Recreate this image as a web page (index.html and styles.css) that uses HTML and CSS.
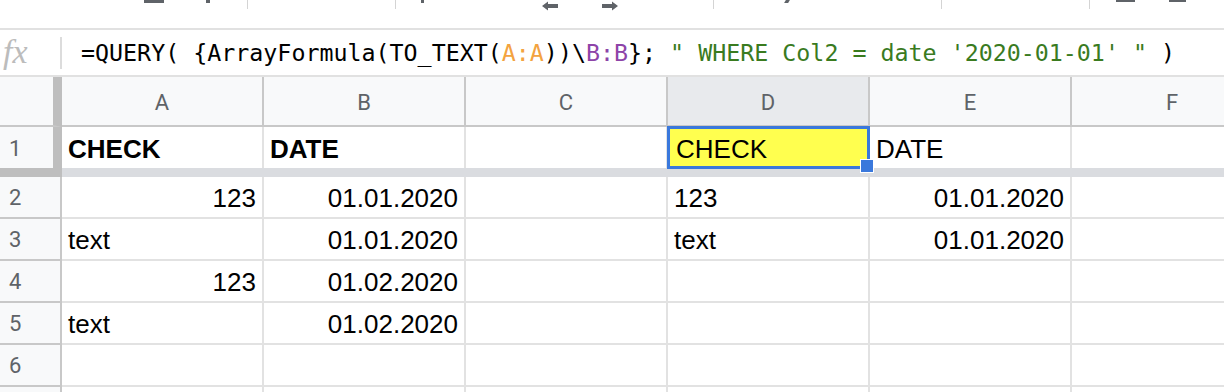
FILE: index.html
```html
<!DOCTYPE html>
<html>
<head>
<meta charset="utf-8">
<link rel="stylesheet" href="styles.css">
</head>
<body>
<div class="toolbar">
  <span class="tb-ico tb-i1"></span>
  <span class="tb-ico tb-i2"></span>
  <span class="tb-sep tb-s1"></span>
  <span class="tb-sep tb-s2"></span>
  <span class="tb-ico tb-i3"></span>
  <svg class="tb-arrow tb-left" width="16" height="10" viewBox="0 0 16 10"><path d="M0 5 L6 0.5 V3 H16 V7 H6 V9.5 Z"/></svg>
  <svg class="tb-arrow tb-right" width="16" height="10" viewBox="0 0 16 10"><path d="M16 5 L10 0.5 V3 H0 V7 H10 V9.5 Z"/></svg>
  <span class="tb-sep tb-s3"></span>
  <span class="tb-ico tb-i4"></span>
  <span class="tb-sep tb-s4"></span>
  <span class="tb-sep tb-s5"></span>
  <span class="tb-ico tb-i5"></span>
  <span class="tb-ico tb-i6"></span>
</div>
<div class="formula-bar">
  <span class="fx">fx</span>
  <span class="fb-sep"></span>
  <span class="formula">=QUERY( {ArrayFormula(TO_TEXT(<span class="rng-a">A:A</span>))\<span class="rng-b">B:B</span>}; <span class="str">" WHERE Col2 = date '2020-01-01' "</span> )</span>
</div>
<div class="sheet">
  <div class="corner"></div>
  <div class="ch">A</div>
  <div class="ch">B</div>
  <div class="ch">C</div>
  <div class="ch ch-sel">D</div>
  <div class="ch">E</div>
  <div class="ch">F</div>

  <div class="rh rh-frozen">1</div>
  <div class="cell r1 bold">CHECK</div>
  <div class="cell r1 bold">DATE</div>
  <div class="cell r1"></div>
  <div class="cell r1 sel">CHECK</div>
  <div class="cell r1">DATE</div>
  <div class="cell r1"></div>

  <div class="band band-rh"></div>
  <div class="band"></div>
  <div class="band"></div>
  <div class="band"></div>
  <div class="band"></div>
  <div class="band"></div>
  <div class="band"></div>

  <div class="rh">2</div>
  <div class="cell num">123</div>
  <div class="cell num">01.01.2020</div>
  <div class="cell"></div>
  <div class="cell">123</div>
  <div class="cell num">01.01.2020</div>
  <div class="cell"></div>

  <div class="rh">3</div>
  <div class="cell">text</div>
  <div class="cell num">01.01.2020</div>
  <div class="cell"></div>
  <div class="cell">text</div>
  <div class="cell num">01.01.2020</div>
  <div class="cell"></div>

  <div class="rh">4</div>
  <div class="cell num">123</div>
  <div class="cell num">01.02.2020</div>
  <div class="cell"></div>
  <div class="cell"></div>
  <div class="cell"></div>
  <div class="cell"></div>

  <div class="rh">5</div>
  <div class="cell">text</div>
  <div class="cell num">01.02.2020</div>
  <div class="cell"></div>
  <div class="cell"></div>
  <div class="cell"></div>
  <div class="cell"></div>

  <div class="rh">6</div>
  <div class="cell"></div>
  <div class="cell"></div>
  <div class="cell"></div>
  <div class="cell"></div>
  <div class="cell"></div>
  <div class="cell"></div>

  <div class="rh"></div>
  <div class="cell"></div>
  <div class="cell"></div>
  <div class="cell"></div>
  <div class="cell"></div>
  <div class="cell"></div>
  <div class="cell"></div>
</div>
</body>
</html>
```

FILE: styles.css
```css
* { box-sizing: border-box; }
html, body {
  margin: 0;
  padding: 0;
  background: #fff;
  overflow: hidden;
  width: 1224px;
  height: 392px;
}
body {
  font-family: "Liberation Sans", Arial, sans-serif;
  color: #000;
}

/* ---------- toolbar (clipped at top) ---------- */
.toolbar {
  height: 30px;
  border-bottom: 2px solid #e1e1e1;
  display: flex;
  align-items: flex-start;
}
.tb-ico {
  display: block;
  height: 3px;
  background: #5f6368;
}
.tb-sep {
  display: block;
  width: 1px;
  height: 9px;
  background: #d4d4d4;
}
.tb-arrow {
  display: block;
  margin-top: 1px;
  fill: #5f6368;
}
.tb-i1 { margin-left: 144px; width: 20px; }
.tb-i2 { margin-left: 42px; width: 4px; }
.tb-s1 { margin-left: 37px; }
.tb-s2 { margin-left: 147px; }
.tb-i3 { margin-left: 25px; width: 3px; }
.tb-left { margin-left: 118px; }
.tb-right { margin-left: 44px; }
.tb-s3 { margin-left: 95px; }
.tb-i4 { margin-left: 71px; width: 4px; transform: skewX(-30deg); }
.tb-s4 { margin-left: 152px; }
.tb-s5 { margin-left: 147px; }
.tb-i5 { margin-left: 26px; width: 19px; height: 2px; }
.tb-i6 { margin-left: 34px; width: 17px; height: 2px; }

/* ---------- formula bar ---------- */
.formula-bar {
  height: 47px;
  border-bottom: 2px solid #e1e1e1;
  display: flex;
  align-items: center;
}
.fx {
  width: 60px;
  padding-left: 3px;
  font-family: "Liberation Serif", "Times New Roman", serif;
  font-style: italic;
  font-size: 34px;
  color: #bcbcbc;
  line-height: 1;
  margin-top: -2px;
}
.fb-sep {
  width: 2px;
  height: 32px;
  background: #dcdcdc;
}
.formula {
  margin-left: 19px;
  font-family: "DejaVu Sans Mono", monospace;
  font-size: 23.3px;
  color: #000;
  white-space: pre;
  margin-top: -1px;
}
.rng-a { color: #f3a340; }
.rng-b { color: #8d44a8; }
.str { color: #3a7b1f; }

/* ---------- sheet grid ---------- */
.sheet {
  display: grid;
  grid-template-columns: 62px repeat(6, 202px);
  grid-template-rows: 50px 41px 9px repeat(6, 42px);
  width: 1274px;
}
.corner {
  background: #f8f9fa;
  border-right: 9px solid #bebebe;
  border-bottom: 2px solid #c8c8c8;
}
.ch {
  background: #f8f9fa;
  border-right: 2px solid #c8c8c8;
  border-bottom: 2px solid #c8c8c8;
  display: flex;
  align-items: center;
  justify-content: center;
  font-family: Roboto, "Liberation Sans", sans-serif;
  font-size: 22px;
  color: #5f6368;
  padding-top: 2px;
}
.ch-sel { background: #e8eaed; }
.rh {
  background: #f8f9fa;
  border-right: 2px solid #c8c8c8;
  border-bottom: 2px solid #c8c8c8;
  display: flex;
  align-items: center;
  padding-left: 9px;
  padding-top: 1px;
  font-family: Roboto, "Liberation Sans", sans-serif;
  font-size: 22px;
  color: #5f6368;
}
.rh-frozen {
  border-right: 9px solid #bebebe;
  border-bottom: none;
}
.band { background: #dadce0; }
.band-rh { background: #bebebe; }

.cell {
  border-right: 2px solid #e2e2e2;
  border-bottom: 2px solid #e2e2e2;
  padding: 3px 6px 0;
  font-size: 26px;
  line-height: 37px;
  white-space: nowrap;
  overflow: hidden;
}
.r1 {
  border-bottom: none;
  padding-top: 4px;
}
.bold { font-weight: bold; }
.num { text-align: right; }

.sel {
  position: relative;
  overflow: visible;
  background: #ffff4f;
  padding-left: 8px;
}
.sel::before {
  content: "";
  position: absolute;
  left: -1px;
  top: -1px;
  right: -2px;
  bottom: -1px;
  border: 3px solid #3a78dc;
}
.sel::after {
  content: "";
  position: absolute;
  right: -6px;
  bottom: -5px;
  width: 12px;
  height: 12px;
  background: #3a78dc;
  border: 1px solid #fff;
  z-index: 2;
}
```
